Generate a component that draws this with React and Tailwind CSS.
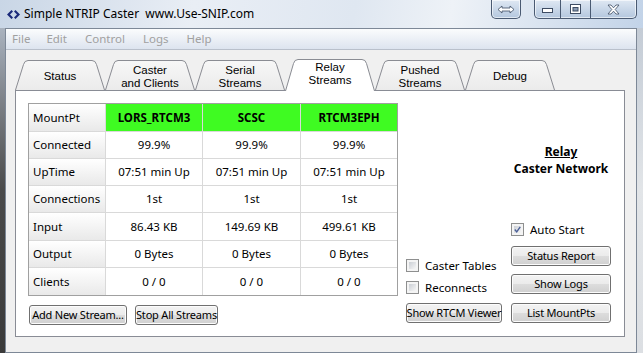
import React from 'react';

const font = "font-['Noto_Sans',sans-serif]";

const columns = ['LORS_RTCM3', 'SCSC', 'RTCM3EPH'];

const rows = [
  { label: 'Connected', h: 'h-[26px]', values: ['99.9%', '99.9%', '99.9%'] },
  { label: 'UpTime', h: 'h-[26px]', values: ['07:51 min Up', '07:51 min Up', '07:51 min Up'] },
  { label: 'Connections', h: 'h-[26px]', values: ['1st', '1st', '1st'] },
  { label: 'Input', h: 'h-[27px]', values: ['86.43 KB', '149.69 KB', '499.61 KB'] },
  { label: 'Output', h: 'h-[26px]', values: ['0 Bytes', '0 Bytes', '0 Bytes'] },
  { label: 'Clients', h: 'h-[27px]', values: ['0 / 0', '0 / 0', '0 / 0'] },
];

const tabs = [
  { label: ['Status'] },
  { label: ['Caster', 'and Clients'] },
  { label: ['Serial', 'Streams'] },
  { label: ['Relay', 'Streams'], active: true },
  { label: ['Pushed', 'Streams'] },
  { label: ['Debug'] },
];

function Tab({ label, active }) {
  const top = active ? 0.5 : 1.5;
  const d = `M0.5 ${active ? 32 : 31} L8.5 ${top + 4} Q9.5 ${top} 13 ${top} H77 Q80.5 ${top} 81.5 ${top + 4} L89.5 ${active ? 32 : 31}`;
  return (
    <div className={`relative w-[90px] h-[31px] flex flex-col items-center justify-center font-['Liberation_Sans',sans-serif] text-[11.5px] ${active ? 'pb-[1px]' : 'pt-[4px]'}`}>
      <svg className="absolute left-0 top-0 overflow-visible" width="90" height="32">
        <defs>
          <linearGradient id="tabg" x1="0" y1="0" x2="0" y2="1">
            <stop offset="0" stopColor="#f7f7f7" />
            <stop offset="1" stopColor="#ebebeb" />
          </linearGradient>
        </defs>
        <path d={d} fill={active ? '#ffffff' : 'url(#tabg)'} stroke="#8a8c93" strokeWidth="1" />
      </svg>
      {label.map((l) => (
        <span key={l} className="relative leading-[13px] text-black">{l}</span>
      ))}
    </div>
  );
}

function Button({ children, className = '' }) {
  return (
    <div className={`h-[20px] flex items-center justify-center rounded-[3px] border border-[#707070] bg-[linear-gradient(#f3f3f3,#ebebeb_50%,#dddddd_50%,#d0d0d0)] shadow-[inset_0_0_0_1px_#fcfcfc] text-black text-[11px] tracking-[-0.2px] whitespace-nowrap ${className}`}>
      {children}
    </div>
  );
}

function Checkbox({ checked, label }) {
  return (
    <div className="h-[15px] flex items-center gap-[6px]">
      <div className="w-[13px] h-[13px] border border-[#8e8f8f] bg-[#f4f4f4] p-[2px]">
        <div className="w-full h-full bg-gradient-to-br from-[#cbcfd5] to-[#f6f6f6] flex items-center justify-center">
          {checked && (
            <svg width="9" height="9" viewBox="0 0 9 9">
              <path d="M1 4.5 L3.5 7.5 L8 1" fill="none" stroke="#4a5f97" strokeWidth="1.8" />
            </svg>
          )}
        </div>
      </div>
      <span className="text-black">{label}</span>
    </div>
  );
}

function TitleButtons() {
  return (
    <div className="flex items-start gap-[13px] mr-[6px]">
      <div className="w-[30px] h-[19px] rounded-b-[5px] border border-t-0 border-[#4a5a72] bg-gradient-to-b from-[#dfe8f3] to-[#b4c7de] shadow-[inset_0_0_0_1px_rgba(255,255,255,0.6)] flex items-center justify-center">
        <svg width="18" height="9" viewBox="0 0 18 9">
          <path d="M1 4.5 L5 1 V3 H13 V1 L17 4.5 L13 8 V6 H5 V8 Z" fill="#ffffff" stroke="#3d4c63" strokeWidth="0.8" />
        </svg>
      </div>
      <div className="w-[103px] h-[19px] rounded-b-[5px] border border-t-0 border-[#4a5a72] bg-gradient-to-b from-[#dfe8f3] to-[#b4c7de] shadow-[inset_0_0_0_1px_rgba(255,255,255,0.6)] flex">
        <div className="w-[26px] h-full flex items-center justify-center pt-[3px] border-r border-[#4a5a72]">
          <svg width="11" height="5" viewBox="0 0 11 5">
            <rect x="0.5" y="0.5" width="10" height="4" fill="#ffffff" stroke="#3d4c63" />
          </svg>
        </div>
        <div className="w-[30px] h-full flex items-center justify-center border-r border-[#4a5a72]">
          <svg width="11" height="10" viewBox="0 0 11 10">
            <rect x="0.5" y="0.5" width="10" height="9" fill="#ffffff" stroke="#3d4c63" />
            <rect x="3" y="3.5" width="5" height="3.5" fill="#8a9bb3" stroke="#3d4c63" />
          </svg>
        </div>
        <div className="flex-1 h-full flex items-center justify-center">
          <svg width="13" height="11" viewBox="0 0 13 11">
            <path d="M1 1 H4 L6.5 3.8 L9 1 H12 L8.2 5.5 L12 10 H9 L6.5 7.2 L4 10 H1 L4.8 5.5 Z" fill="#ffffff" stroke="#3d4c63" strokeWidth="0.8" />
          </svg>
        </div>
      </div>
    </div>
  );
}

export default function App() {
  return (
    <div className={`w-[643px] h-[353px] overflow-hidden flex flex-col text-[11.5px] ${font} bg-[#d6dde6]`}>
      {/* title bar */}
      <div className="h-[28px] shrink-0 flex items-start justify-between bg-[linear-gradient(100deg,#c9d6e6,#e9eef5_30%,#dfe7f1_55%,#eef2f7_70%,#c2d3e8)]">
        <div className="flex items-center h-[28px] pl-[7px] gap-[4px]">
          <svg width="13" height="9" viewBox="0 0 13 9">
            <path d="M0 4.5 L4.5 0 L6 1.5 L3 4.5 L6 7.5 L4.5 9 Z" fill="#1b2a7a" />
            <path d="M13 4.5 L8.5 0 L7 1.5 L10 4.5 L7 7.5 L8.5 9 Z" fill="#1b2a7a" />
          </svg>
          <span className="text-[12px] text-black whitespace-pre">Simple NTRIP Caster  www.Use-SNIP.com</span>
        </div>
        <TitleButtons />
      </div>

      <div className="flex-1 flex">
        <div className="w-[5px] bg-gradient-to-b from-[#aab3bf] via-[#4a4a4a] to-[#3a3a3a]" />

        {/* client area */}
        <div className="w-[632px] border border-[#7d8897] bg-[#f0f0f0] flex flex-col">
          <div className="h-[21px] shrink-0 flex items-center pl-[2px] border-b border-[#b9c0cb] bg-gradient-to-b from-[#fbfcfd] to-[#dde4ef] text-[#a0a0a0]">
            <span className="px-[4px]">File</span>
            <span className="ml-[8px] px-[4px]">Edit</span>
            <span className="ml-[10px] px-[4px]">Control</span>
            <span className="ml-[10px] px-[4px]">Logs</span>
            <span className="ml-[10px] px-[4px]">Help</span>
          </div>

          <div className="pl-[9px] pt-[9px] pr-[11px]">
            <div className="flex">
              {tabs.map((t, i) => (
                <Tab key={i} label={t.label} active={t.active} />
              ))}
            </div>

            <div className="h-[247px] border border-[#898c95] bg-white pl-[12px] pt-[12px] flex">
              {/* table + bottom buttons */}
              <div className="w-[370px] flex flex-col">
                <div className="grid grid-cols-[76px_96px_97px_96px] gap-px bg-[#d9d9d9] border border-[#a0a0a0]">
                  <div className="h-[27px] flex items-center pl-[4px] bg-gradient-to-b from-white to-[#e9e9e9] text-black">MountPt</div>
                  {columns.map((c) => (
                    <div key={c} className="h-[27px] flex items-center justify-center bg-[#3ffb22] font-bold text-black">{c}</div>
                  ))}
                  {rows.map((r) => (
                    <React.Fragment key={r.label}>
                      <div className={`${r.h} flex items-center pl-[4px] bg-gradient-to-b from-white to-[#e9e9e9] text-black`}>{r.label}</div>
                      {r.values.map((v, i) => (
                        <div key={i} className={`${r.h} flex items-center justify-center bg-white text-black`}>{v}</div>
                      ))}
                    </React.Fragment>
                  ))}
                </div>
                <div className="mt-[9px] flex gap-[8px] pl-[1px]">
                  <Button className="w-[98px] h-[19px]">Add New Stream...</Button>
                  <Button className="w-[83px] h-[19px]">Stop All Streams</Button>
                </div>
              </div>

              {/* middle column */}
              <div className="ml-[8px] w-[95px] flex flex-col">
                <div className="mt-[155px]">
                  <Checkbox label="Caster Tables" />
                </div>
                <div className="mt-[7px]">
                  <Checkbox label="Reconnects" />
                </div>
                <Button className="mt-[8px] w-[96px]">Show RTCM Viewer</Button>
              </div>

              {/* right column */}
              <div className="ml-[10px] w-[100px] flex flex-col">
                <div className="mt-[40px] flex flex-col items-center font-bold text-[12px] leading-[17px] text-black">
                  <span className="underline">Relay</span>
                  <span>Caster Network</span>
                </div>
                <div className="mt-[45px]">
                  <Checkbox checked label="Auto Start" />
                </div>
                <Button className="mt-[9px]">Status Report</Button>
                <Button className="mt-[8px]">Show Logs</Button>
                <Button className="mt-[9px]">List MountPts</Button>
              </div>
            </div>
          </div>
        </div>

        <div className="w-[6px] bg-gradient-to-b from-[#c4ccd6] via-[#e2e5e8] to-[#dcdfe3]" />
      </div>
    </div>
  );
}
